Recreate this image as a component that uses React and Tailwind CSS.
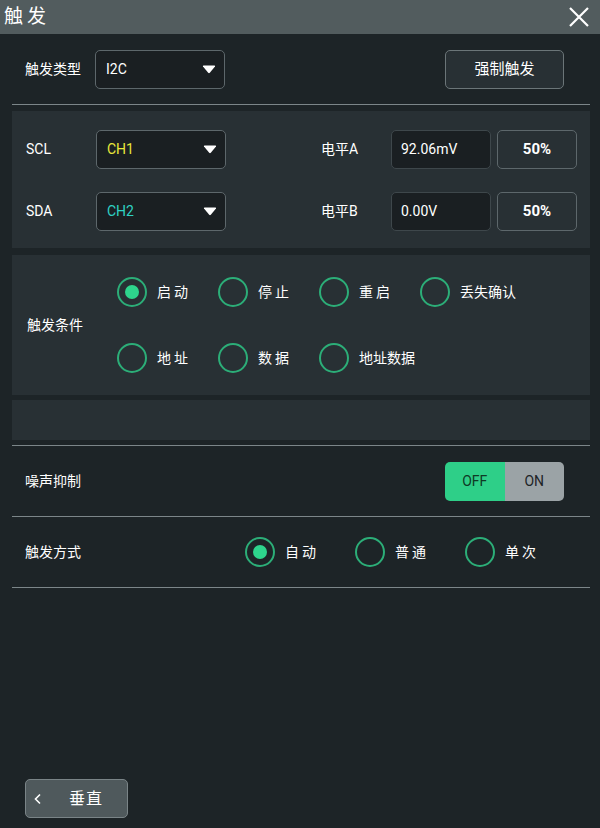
import { useState } from "react";

const font = { fontFamily: "Roboto, 'Noto Sans CJK SC', sans-serif" };

const Caret = () => (
  <svg width="14" height="9" viewBox="0 0 14 9">
    <path d="M1 1.5 Q0.5 0.5 1.8 0.5 H12.2 Q13.5 0.5 13 1.5 L7.8 7.8 Q7 8.7 6.2 7.8 Z" fill="#fff" />
  </svg>
);

const Select = ({ value, color }) => (
  <div className="w-[130px] h-[39px] rounded-[5px] border border-[#5d676b] bg-[#1a1f22] flex items-center justify-between pl-[10px] pr-[8px]">
    <span className={`text-[14px] ${color}`}>{value}</span>
    <Caret />
  </div>
);

const Radio = ({ label, checked, onClick }) => (
  <button onClick={onClick} className="flex items-center gap-[10px] whitespace-nowrap">
    <span className="w-[30px] h-[30px] shrink-0 rounded-full border-[2.5px] border-[#2cae78] flex items-center justify-center">
      {checked && <span className="w-[14px] h-[14px] rounded-full bg-[#2ed48c]" />}
    </span>
    <span className={`text-[14px] text-white ${label.length === 2 ? "tracking-[3px]" : ""}`}>{label}</span>
  </button>
);

const Divider = () => <div className="h-px bg-[#7c8689]" />;

export default function App() {
  const [cond, setCond] = useState("启动");
  const [mode, setMode] = useState("自动");
  const [noise, setNoise] = useState(false);

  const row1 = ["启动", "停止", "重启", "丢失确认"];
  const row2 = ["地址", "数据", "地址数据"];

  return (
    <div style={font} className="w-[600px] h-[828px] bg-[#1d2427] flex flex-col text-white">
      <div className="h-[34px] bg-[#525c5e] flex items-center justify-between pl-[4px] pr-[10px]">
        <span className="text-[19px] tracking-[4px]">触发</span>
        <svg width="22" height="22" viewBox="0 0 22 22">
          <path d="M2 2 L20 20 M20 2 L2 20" stroke="#fff" strokeWidth="2.2" />
        </svg>
      </div>

      <div className="pl-[12px] pr-[10px] flex flex-col flex-1">
        <div className="h-[70px] flex items-center pl-[13px] pr-[26px]">
          <span className="w-[70px] text-[14px]">触发类型</span>
          <Select value="I2C" color="text-white" />
          <div className="flex-1" />
          <button className="w-[119px] h-[39px] rounded-[5px] border border-[#6b7578] bg-[#283034] text-[15px]">
            强制触发
          </button>
        </div>
        <Divider />

        <div className="mt-[6px] h-[137px] bg-[#283034] flex flex-col justify-center gap-[21px]">
          {[
            ["SCL", "CH1", "text-[#e8e83a]", "电平A", "92.06mV"],
            ["SDA", "CH2", "text-[#2fd2c4]", "电平B", "0.00V"],
          ].map(([lbl, ch, c, lv, val]) => (
            <div key={lbl} className="flex items-center pl-[14px] pt-[2px]">
              <span className="w-[70px] text-[14px]">{lbl}</span>
              <Select value={ch} color={c} />
              <span className="ml-[95px] w-[70px] text-[14px]">{lv}</span>
              <div className="w-[100px] h-[39px] rounded-[5px] border border-[#3e474b] bg-[#1a1f22] flex items-center pl-[9px] text-[14px]">
                {val}
              </div>
              <button className="ml-[6px] w-[80px] h-[39px] rounded-[5px] border border-[#5d676b] bg-[#283034] text-[15px] font-bold">
                50%
              </button>
            </div>
          ))}
        </div>

        <div className="mt-[7px] h-[140px] bg-[#283034] flex items-center pl-[15px]">
          <span className="w-[90px] text-[14px]">触发条件</span>
          <div className="flex flex-col gap-[36px]">
            {[row1, row2].map((r, i) => (
              <div key={i} className="flex">
                {r.map((x) => (
                  <div key={x} className="w-[101px]">
                    <Radio label={x} checked={cond === x} onClick={() => setCond(x)} />
                  </div>
                ))}
              </div>
            ))}
          </div>
        </div>

        <div className="mt-[5px] h-[40px] bg-[#283034]" />
        <div className="mt-[5px]">
          <Divider />
        </div>

        <div className="h-[70px] flex items-center justify-between pl-[13px] pr-[26px]">
          <span className="text-[14px]">噪声抑制</span>
          <div className="w-[119px] h-[39px] rounded-[5px] overflow-hidden flex text-[14px]">
            <button onClick={() => setNoise(false)} className={`flex-1 ${!noise ? "bg-[#2ecf88] text-[#0f3a25]" : "bg-[#9ba3a6] text-[#1d2427]"}`}>
              OFF
            </button>
            <button onClick={() => setNoise(true)} className={`flex-1 ${noise ? "bg-[#2ecf88] text-[#0f3a25]" : "bg-[#9ba3a6] text-[#1d2427]"}`}>
              ON
            </button>
          </div>
        </div>
        <Divider />

        <div className="h-[70px] flex items-center pl-[13px]">
          <span className="w-[220px] text-[14px]">触发方式</span>
          {["自动", "普通", "单次"].map((x) => (
            <div key={x} className="w-[110px]">
              <Radio label={x} checked={mode === x} onClick={() => setMode(x)} />
            </div>
          ))}
        </div>
        <Divider />

        <div className="flex-1" />
        <div className="pl-[13px] pb-[10px]">
          <button className="w-[103px] h-[39px] rounded-[5px] border border-[#7a8487] bg-[#4f595c] flex items-center pl-[7px]">
            <svg width="10" height="12" viewBox="0 0 10 12">
              <path d="M7 1.5 L2.5 6 L7 10.5" stroke="#fff" strokeWidth="1.6" fill="none" />
            </svg>
            <span className="ml-[26px] text-[16px] tracking-[1px]">垂直</span>
          </button>
        </div>
      </div>
    </div>
  );
}
